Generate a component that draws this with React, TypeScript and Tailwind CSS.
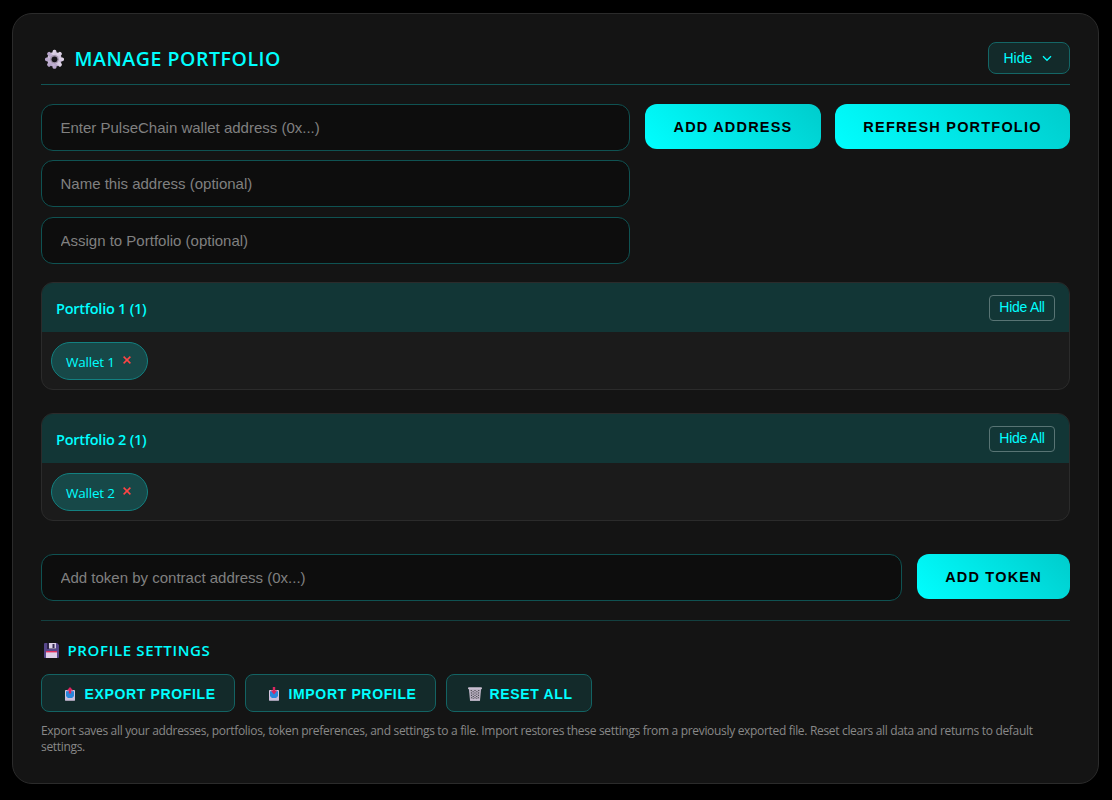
import React from "react";

const portfolios = [
  { id: 1, name: "Portfolio 1", wallets: ["Wallet 1"] },
  { id: 2, name: "Portfolio 2", wallets: ["Wallet 2"] },
];

const GearIcon = () => (
  <svg width="20" height="20" viewBox="0 0 20 20">
    <defs>
      <linearGradient id="gear" x1="0" y1="0" x2="0.3" y2="1">
        <stop offset="0" stopColor="#e6dcec" />
        <stop offset="1" stopColor="#b7a5cb" />
      </linearGradient>
    </defs>
    <g fill="url(#gear)">
      <circle cx="10.5" cy="10.3" r="7.4" />
      {[0, 45, 90, 135].map((angle) => (
        <rect key={angle} x="8.6" y="0.8" width="3.8" height="19" rx="1.6" transform={`rotate(${angle} 10.5 10.3)`} />
      ))}
    </g>
    <circle cx="10.5" cy="10.3" r="4.3" fill="#a294ab" />
    <circle cx="10.5" cy="10.3" r="2.9" fill="#17151a" />
  </svg>
);

const FloppyIcon = () => (
  <svg width="15" height="15" viewBox="0 0 15 15">
    <path d="M1 0h12l2 2v12a1 1 0 0 1-1 1H1a1 1 0 0 1-1-1V1a1 1 0 0 1 1-1z" fill="#56468a" />
    <rect x="3" y="0" width="9" height="6" fill="#2d2447" />
    <rect x="5" y="0" width="7" height="5.5" fill="#dcd0e6" />
    <rect x="8.5" y="1" width="2" height="4" fill="#352b50" />
    <rect x="2" y="8" width="11" height="7" fill="#dfd0ea" />
    <rect x="2" y="8" width="11" height="1.4" fill="#e3315f" />
  </svg>
);

const TrayIcon = ({ down = false }) => (
  <svg width="12" height="14" viewBox="0 0 12 14">
    <rect x="1" y="3" width="10" height="10.5" rx="0.8" fill="#d5c7df" />
    <rect x="2" y="4.2" width="8" height="6.8" fill="#2886dc" />
    <path d="M1 9.6h2l1.2 1.6h3.6L9 9.6h2v3.9H1z" fill="#cbbdda" />
    <path d="M2.4 9.4h7.2L7.8 11H4.2z" fill="#2886dc" />
    {down ? (
      <path d="M4.8 0h2.4v3.4h2L6 7.4 2.8 3.4h2z" fill="#db2460" />
    ) : (
      <path d="M6 0l3.2 3.4h-2v3.2H4.8V3.4h-2z" fill="#db2460" />
    )}
  </svg>
);

const TrashIcon = () => (
  <svg width="14" height="14" viewBox="0 0 14 14">
    <path d="M.8 1.5h12.4L12 13.5H2z" fill="#b8afc0" />
    <g stroke="#39383f" strokeWidth="1" strokeDasharray="1.1 1.3">
      <path d="M3.2 3l.6 9M7 3v9M10.8 3l-.6 9" />
      <path d="M5.1 4.2l.2 8M8.9 4.2l-.2 8" />
    </g>
    <rect x="0" y="0.3" width="14" height="1.9" rx="0.9" fill="#c9bfd1" />
    <rect x="2" y="12.2" width="10" height="1.6" rx="0.6" fill="#c9bfd1" />
  </svg>
);

const inputClass =
  "block h-[47px] w-full rounded-xl border border-[#0f5252] bg-[#0d0d0d] px-[18.5px] text-[15px] text-white placeholder:text-[#808080] placeholder:opacity-100 outline-none";
const primaryClass =
  "h-[45px] shrink-0 rounded-xl bg-[linear-gradient(45deg,#00ffff,#00cccc)] pt-0.5 text-[14.5px] font-bold text-black";
const secondaryClass =
  "flex h-[38px] items-center rounded-lg border border-[#136363] bg-[#132a2a] pt-0.5 text-[14px] font-bold text-[#00ffff]";

const App = () => {
  return (
    <div className="h-[800px] bg-black pt-[13px] pl-3 font-['Liberation_Sans',Arial,sans-serif]">
      <div className="h-[771px] w-[1087px] rounded-[20px] border border-[#2b2b2b] bg-[#141414] p-7">
        {/* Header */}
        <div className="flex h-[43px] items-start justify-between border-b border-[#115555]">
          <div className="flex h-[34px] items-center pl-[3px]">
            <GearIcon />
            <h2 className="ml-[10.5px] font-['Open_Sans','Noto_Sans',sans-serif] text-[19.5px] font-semibold tracking-[0.56px] text-[#00ffff]">
              MANAGE PORTFOLIO
            </h2>
          </div>
          <button className="flex h-8 w-[82px] items-center rounded-lg border border-[#146666] bg-[#132a2a] pl-[14.5px] text-[14px] text-[#00ffff]">
            Hide
            <svg className="ml-[9.5px]" width="10" height="8" viewBox="0 0 10 8" fill="none" stroke="#00ffff" strokeWidth="1.3">
              <path d="M1 2.3l4 4 4-4" />
            </svg>
          </button>
        </div>

        {/* Add address */}
        <div className="mt-[19px] flex items-start">
          <div className="w-[589px]">
            <input className={inputClass} placeholder="Enter PulseChain wallet address (0x...)" />
            <input className={`${inputClass} mt-[9px]`} placeholder="Name this address (optional)" />
            <input className={`${inputClass} mt-[10px]`} placeholder="Assign to Portfolio (optional)" />
          </div>
          <button className={`${primaryClass} ml-[15px] w-[176px] tracking-[1.2px]`}>ADD ADDRESS</button>
          <button className={`${primaryClass} ml-[14px] w-[235px] tracking-[1.2px]`}>REFRESH PORTFOLIO</button>
        </div>

        {/* Portfolio groups */}
        <div className="mt-[18px] space-y-[23px]">
          {portfolios.map((portfolio) => (
            <div key={portfolio.id} className="h-[108px] overflow-hidden rounded-xl border border-[#2b2b2b] bg-[#1b1b1b]">
              <div className="flex h-[49px] items-center justify-between bg-[#123636] px-[14px]">
                <h3 className="pt-[3px] font-['Open_Sans','Noto_Sans',sans-serif] text-[14.5px] font-semibold tracking-[-0.25px] text-[#00ffff]">
                  {portfolio.name} ({portfolio.wallets.length})
                </h3>
                <button className="h-[26px] w-[66px] rounded border border-[#587474] text-[14px] tracking-[-0.25px] text-[#00ffff]">
                  Hide All
                </button>
              </div>
              <div className="p-[10px] pl-[9px]">
                {portfolio.wallets.map((wallet) => (
                  <div key={wallet} className="flex h-[38px] w-[97px] items-center rounded-full border border-[#138080] bg-[#174848] pl-[14px]">
                    <span className="pt-0.5 font-['Open_Sans','Noto_Sans',sans-serif] text-[13.5px] tracking-[-0.2px] text-[#00ffff]">{wallet}</span>
                    <svg className="mb-[3px] ml-[8.5px]" width="8" height="8" viewBox="0 0 8 8" stroke="#ff4444" strokeWidth="1.5">
                      <path d="M.6.6l6.8 6.8M7.4.6L.6 7.4" />
                    </svg>
                  </div>
                ))}
              </div>
            </div>
          ))}
        </div>

        {/* Add token */}
        <div className="mt-[33px] flex items-start gap-[15px]">
          <input className={inputClass} placeholder="Add token by contract address (0x...)" />
          <button className={`${primaryClass} w-[153px] tracking-[1.2px]`}>ADD TOKEN</button>
        </div>

        {/* Profile settings */}
        <div className="mt-[19px] border-t border-[#134040] pt-[18px]">
          <div className="flex h-[22px] items-center pl-[3px]">
            <FloppyIcon />
            <h3 className="ml-[8.5px] font-['Open_Sans','Noto_Sans',sans-serif] text-[15px] font-semibold tracking-[0.65px] text-[#00ffff]">
              PROFILE SETTINGS
            </h3>
          </div>
          <div className="mt-[13px] flex gap-[10px]">
            <button className={`${secondaryClass} w-[194px] pl-[22px]`}>
              <TrayIcon />
              <span className="ml-[8.5px] tracking-[0.65px]">EXPORT PROFILE</span>
            </button>
            <button className={`${secondaryClass} w-[191px] pl-[22px]`}>
              <TrayIcon down />
              <span className="ml-[8.5px] tracking-[0.65px]">IMPORT PROFILE</span>
            </button>
            <button className={`${secondaryClass} w-[146px] pl-[21px]`}>
              <TrashIcon />
              <span className="ml-[7.5px] tracking-[0.65px]">RESET ALL</span>
            </button>
          </div>
          <p className="mt-[11px] font-['Open_Sans','Noto_Sans',sans-serif] text-[12px] leading-4 tracking-[-0.32px] text-[#888888]">
            Export saves all your addresses, portfolios, token preferences, and settings to a file. Import restores these settings from a previously exported file. Reset clears all data and returns to default
            <br />
            settings.
          </p>
        </div>
      </div>
    </div>
  );
};

export default App;
